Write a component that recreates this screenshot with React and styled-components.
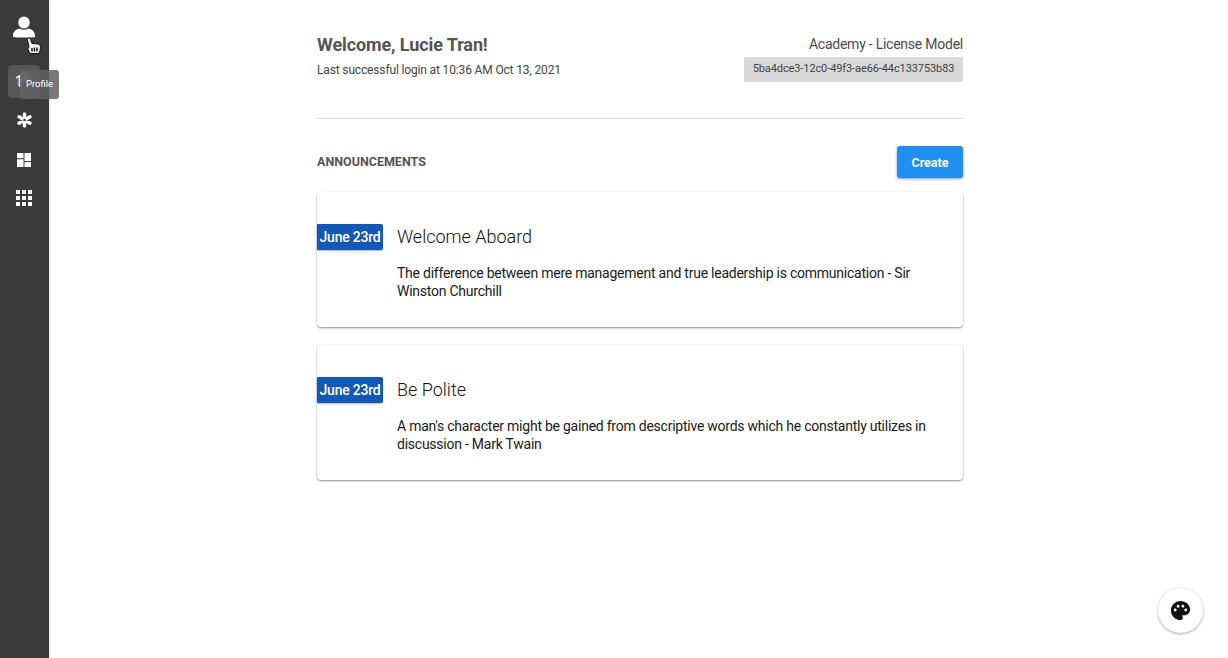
import React from 'react';
import styled, { createGlobalStyle } from 'styled-components';
import { MdApps, MdPalette, MdHome } from 'react-icons/md';

const GlobalStyle = createGlobalStyle`
  html, body {
    margin: 0;
    height: 100%;
    background: #fff;
    font-family: Roboto, "Liberation Sans", sans-serif;
  }
  * { box-sizing: border-box; }
`;

const Shell = styled.div`
  display: flex;
  width: 1228px;
  height: 658px;
  overflow: hidden;
  position: relative;
`;

const Sidebar = styled.nav`
  width: 49px;
  flex: none;
  background: #3a3a3a;
  box-shadow: 1px 0 3px rgba(0, 0, 0, 0.12);
  display: flex;
  flex-direction: column;
  position: relative;
`;

const NavIcon = styled.div`
  width: 48px;
  height: ${(p) => p.$h}px;
  display: flex;
  align-items: center;
  justify-content: center;
  color: #fff;
  font-size: ${(p) => p.$size || 22}px;
`;

const ActiveTile = styled.div`
  position: absolute;
  left: 8px;
  top: 65px;
  width: 32px;
  height: 33px;
  border-radius: 4px;
  background: #565656;
  color: #fff;
  font-size: 16px;
  line-height: 33px;
  padding-left: 7px;
`;

const TileHome = styled(MdHome)`
  position: absolute;
  left: 5px;
  top: 3px;
  color: #8f8f8f;
  font-size: 22px;
`;

const TileDigit = styled.span`
  position: relative;
`;

const Tooltip = styled.div`
  position: absolute;
  left: 20px;
  top: 70px;
  width: 39px;
  height: 29px;
  border-radius: 3px;
  background: rgba(97, 97, 97, 0.85);
  color: #fff;
  font-size: 9.5px;
  line-height: 28px;
  text-align: center;
  z-index: 3;
`;

const CursorMark = styled.svg`
  position: absolute;
  left: 26px;
  top: 37px;
  z-index: 4;
`;

const Main = styled.main`
  flex: 1;
  display: flex;
  padding: 0 0 0 268px;
`;

const Column = styled.div`
  width: 646px;
`;

const Header = styled.header`
  display: flex;
  justify-content: space-between;
  padding-top: 35px;
  height: 119px;
  border-bottom: 1px solid #d9d9d9;
`;

const Greeting = styled.h1`
  margin: 0;
  font-size: 18px;
  line-height: 20px;
  font-weight: 700;
  letter-spacing: -0.1px;
  color: #555;
`;

const LastLogin = styled.p`
  margin: 8px 0 0;
  font-size: 12px;
  line-height: 14px;
  letter-spacing: -0.15px;
  color: #444;
`;

const Tenant = styled.div`
  display: flex;
  flex-direction: column;
  align-items: flex-end;
  padding-top: 1px;
`;

const TenantName = styled.div`
  font-size: 14px;
  line-height: 17px;
  letter-spacing: -0.24px;
  color: #4a4a4a;
`;

const TenantId = styled.div`
  margin-top: 4px;
  width: 219px;
  height: 25px;
  border-radius: 2px;
  background: #d9d9d9;
  color: #444;
  font-size: 11px;
  line-height: 24px;
  letter-spacing: -0.1px;
  text-align: center;
`;

const SectionBar = styled.div`
  display: flex;
  justify-content: space-between;
  align-items: center;
  margin-top: 27px;
  height: 32px;
`;

const SectionTitle = styled.h2`
  margin: 0 0 2px;
  font-size: 12.5px;
  font-weight: 700;
  color: #555;
`;

const CreateButton = styled.button`
  width: 66px;
  height: 32px;
  border: 0;
  border-radius: 3px;
  background: #1f90f2;
  color: #fff;
  font-family: inherit;
  font-size: 12.5px;
  font-weight: 700;
  box-shadow: 0 1px 3px rgba(0, 0, 0, 0.4);
`;

const CardList = styled.div`
  margin-top: 14px;
  display: flex;
  flex-direction: column;
  gap: 18px;
`;

const Card = styled.article`
  height: 135px;
  border-radius: 4px;
  background: #fff;
  box-shadow: 0 1px 2px rgba(0, 0, 0, 0.45), 0 0 1px rgba(0, 0, 0, 0.04);
  padding-top: 32px;
  display: grid;
  grid-template-columns: 66px 1fr;
  column-gap: 14px;
  align-items: start;
`;

const DateTag = styled.div`
  height: 26px;
  border-radius: 1px 2px 2px 1px;
  background: #1358b4;
  color: #fff;
  font-size: 14px;
  font-weight: 500;
  line-height: 26px;
  letter-spacing: -0.22px;
  text-align: center;
  box-shadow: 0 1px 2px rgba(0, 0, 0, 0.3);
`;

const CardBody = styled.div`
  padding-right: 30px;
`;

const CardTitle = styled.h3`
  margin: 0;
  font-size: 18px;
  font-weight: 300;
  line-height: 26px;
  color: #111;
`;

const CardText = styled.p`
  margin: 14px 0 0;
  font-size: 14px;
  line-height: 18px;
  letter-spacing: -0.24px;
  color: #1a1a1a;
`;

const PaletteFab = styled.button`
  position: absolute;
  right: 25px;
  bottom: 25px;
  width: 45px;
  height: 45px;
  border: 0;
  border-radius: 50%;
  background: #fff;
  color: #111;
  box-shadow: 0 1px 3px rgba(0, 0, 0, 0.35);
  display: flex;
  align-items: center;
  justify-content: center;
  padding: 0;
  font-size: 23px;
`;

const UserIcon = () => (
  <svg width="24" height="22" viewBox="0 0 24 22" fill="currentColor">
    <ellipse cx="12" cy="6.5" rx="5.8" ry="6" />
    <path d="M1 21c-.6-5 2.5-7.5 6.6-8.5 2.6 1.7 6.200 1.700 8.800 0 4.100 1 7.200 3.500 6.600 8.500-1 .7-21 .7-22 0z" />
  </svg>
);

const AsteriskIcon = () => (
  <svg width="15" height="16" viewBox="0 0 15 16" stroke="currentColor" strokeWidth="3.4" strokeLinecap="round">
    <path d="M7.5 2v12M2 4.800l11 6.400M13 4.800L2 11.200" />
    <circle cx="7.5" cy="8" r="1.3" fill="#3a3a3a" stroke="none" />
  </svg>
);

const DashboardIcon = () => (
  <svg width="14" height="14" viewBox="0 0 14 14" fill="currentColor">
    <path d="M0 0h6.500v5.200H0zM0 6.200h6.500V14H0zM7.500 0H14v8H7.500zM7.500 9H14v5H7.500z" />
  </svg>
);

const HandCursor = () => (
  <CursorMark width="15" height="17" viewBox="0 0 15 17">
    <path d="M4 16.500 1.500 11.500l1.500-1L1.500 3C1.300.8 3.700.3 4.500 2.300L6 6.500l6.500.5 2 2-.5 5-1.500 2.500z" fill="#f2f2f2" stroke="#111" strokeWidth="1" />
    <path d="M6 11v3.500M8.500 10.500v4M11 10.500v4" stroke="#111" strokeWidth="1.400" />
  </CursorMark>
);

const announcements = [
  {
    title: 'Welcome Aboard',
    text: 'The difference between mere management and true leadership is communication - Sir Winston Churchill',
  },
  {
    title: 'Be Polite',
    text: "A man's character might be gained from descriptive words which he constantly utilizes in discussion - Mark Twain",
  },
];

const App = () => {
  return (
    <Shell>
      <GlobalStyle />
      <Sidebar>
        <NavIcon $h={54}><UserIcon /></NavIcon>
        <NavIcon $h={46} />
        <NavIcon $h={39}><AsteriskIcon /></NavIcon>
        <NavIcon $h={41}><DashboardIcon /></NavIcon>
        <NavIcon $h={35} $size={24}><MdApps /></NavIcon>
        <ActiveTile>
          <TileHome />
          <TileDigit>1</TileDigit>
        </ActiveTile>
        <Tooltip>Profile</Tooltip>
        <HandCursor />
      </Sidebar>
      <Main>
        <Column>
          <Header>
            <div>
              <Greeting>Welcome, Lucie Tran!</Greeting>
              <LastLogin>Last successful login at 10:36 AM Oct 13, 2021</LastLogin>
            </div>
            <Tenant>
              <TenantName>Academy - License Model</TenantName>
              <TenantId>5ba4dce3-12c0-49f3-ae66-44c133753b83</TenantId>
            </Tenant>
          </Header>
          <SectionBar>
            <SectionTitle>ANNOUNCEMENTS</SectionTitle>
            <CreateButton>Create</CreateButton>
          </SectionBar>
          <CardList>
            {announcements.map((item) => (
              <Card key={item.title}>
                <DateTag>June 23rd</DateTag>
                <CardBody>
                  <CardTitle>{item.title}</CardTitle>
                  <CardText>{item.text}</CardText>
                </CardBody>
              </Card>
            ))}
          </CardList>
        </Column>
      </Main>
      <PaletteFab><MdPalette /></PaletteFab>
    </Shell>
  );
};

export default App;
